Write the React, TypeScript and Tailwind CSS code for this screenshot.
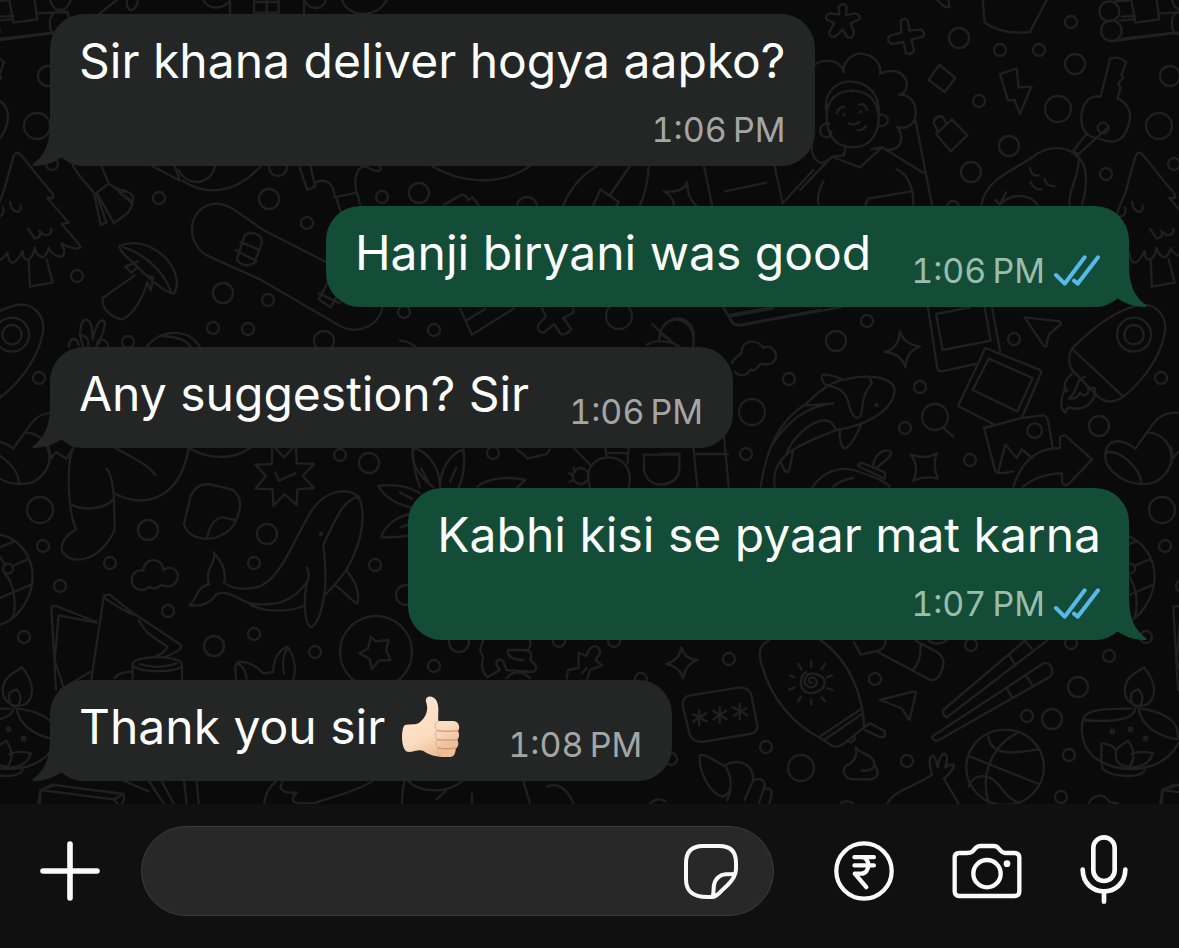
type Message = {
  id: number;
  text: string;
  time: string;
  mine?: boolean;
  thumbsUp?: boolean;
  // long messages push the time onto its own row
  stacked?: boolean;
};

const messages: Message[] = [
  { id: 1, text: "Sir khana deliver hogya aapko?", time: "1:06\u202fPM", stacked: true },
  { id: 2, text: "Hanji biryani was good", time: "1:06\u202fPM", mine: true },
  { id: 3, text: "Any suggestion? Sir", time: "1:06\u202fPM" },
  { id: 4, text: "Kabhi kisi se pyaar mat karna", time: "1:07\u202fPM", mine: true, stacked: true },
  { id: 5, text: "Thank you sir", time: "1:08\u202fPM", thumbsUp: true },
];

// cx, cy, r
const dots = [
  [52, 164, 6], [159, 198, 6], [269, 199, 10], [307, 223, 6], [382, 197, 6], [77, 276, 6],
  [223, 293, 10], [268, 300, 6], [213, 328, 6], [248, 329, 6], [324, 341, 10], [128, 342, 6],
  [37, 126, 13], [48, 76, 10], [278, 167, 9], [959, 38, 10], [1071, 22, 6], [1000, 50, 6],
  [1039, 50, 6], [1075, 64, 10], [979, 101, 6], [1058, 109, 13], [1009, 146, 10], [971, 172, 10],
  [1106, 174, 6], [953, 207, 6], [40, 510, 13], [43, 546, 6], [60, 586, 6], [110, 563, 6],
  [148, 530, 10], [24, 637, 6], [168, 611, 6], [267, 534, 10], [254, 563, 6], [254, 634, 6],
  [214, 646, 10], [315, 652, 6], [375, 565, 6], [340, 455, 6], [369, 463, 10], [406, 595, 10],
  [376, 652, 36], [867, 321, 6], [836, 341, 10], [789, 379, 6], [752, 412, 13], [746, 454, 6],
  [920, 387, 6], [905, 428, 6], [970, 460, 6], [1014, 339, 6], [1099, 426, 10], [39, 378, 6],
  [935, 417, 13], [729, 659, 6], [766, 747, 6], [801, 768, 13], [875, 679, 6], [907, 761, 6],
  [971, 645, 6], [1027, 716, 6], [1052, 719, 10], [1069, 755, 6], [1061, 797, 6], [1078, 687, 10],
  [1109, 656, 6], [1071, 643, 6], [671, 759, 6], [419, 193, 10], [527, 207, 10],
  [404, 312, 6], [434, 330, 6], [619, 316, 13], [434, 666, 6], [459, 642, 10], [493, 453, 6],
  [559, 641, 6], [614, 641, 6], [641, 679, 6],
];

function Wallpaper() {
  return (
    <svg
      className="absolute inset-0 h-full w-full"
      viewBox="0 0 1179 804"
      preserveAspectRatio="xMidYMid slice"
      fill="none"
      stroke="#202020"
      strokeWidth="2.3"
      strokeLinecap="round"
      strokeLinejoin="round"
      aria-hidden="true"
    >
      <defs>
        <g id="doodles">
          {dots.map(([cx, cy, r]) => (
            <circle key={`${cx}-${cy}`} cx={cx} cy={cy} r={r} />
          ))}

          {/* tree, brush, mushroom, skateboard */}
          <g transform="scale(.33333)" strokeWidth="7">
            <path d="M54 458C66 464 78 486 158 582L160 594L142 594L206 668L184 672C208 698 232 724 242 742C228 750 208 744 184 730C196 750 194 766 186 770C160 768 152 756 146 744C140 768 130 774 122 770C112 766 106 754 104 742C102 762 92 780 78 778C68 776 68 762 68 752C58 774 48 788 36 788C26 786 24 770 22 758C8 782-8 786-20 776L-22 752C-44 768-60 770-70 752L-34 700L-10 660C-20 640-8 622-8 622L12 572L40 470Q46 456 54 458ZM30 606C34 640 66 646 62 616M84 686L104 716C124 712 122 700 118 692C134 712 156 708 154 686M-8 650C8 650 14 634 8 622M86 782L90 860L158 848L140 778" />
            <path d="M218 494C234 530 264 552 282 580L302 674L320 668L288 580L326 550L302 494M326 550C340 562 352 570 376 572L360 580L398 604L400 592C396 582 388 574 372 574M338 558L398 612L386 636L342 670L290 578" />
            <path d="M358 738C420 712 490 750 520 806C534 838 534 862 522 880C504 884 446 836 414 802C384 774 356 752 358 738ZM370 742C420 756 486 804 512 872M414 784L376 800L394 818L412 802M404 826L308 894C304 926 332 952 366 958C398 946 426 900 442 846L452 872L460 832L440 826" />
            <path d="M698 626C640 592 590 622 578 668C568 712 592 752 628 770L780 838L1020 978C1080 1008 1140 972 1148 920M698 626L790 690L990 792M734 706C752 692 786 700 786 728L762 790C742 802 720 794 710 778ZM722 726L774 748M706 750L770 784M982 850L956 898L992 922L1010 890M956 880L1020 910" />
            <path d="M0 116L160 98M28 0L40 68L112 58L104 0M0 50L40 48M112 40L204 36M150 60C154 30 200 20 208 54M150 60C148 100 160 110 180 96M150 0C160 40 200 40 212 0M300 40L350 0M380 0C380 50 410 30 414 0M610 0C625 30 670 30 690 0V40M762 0V38H836V0M762 6H836M800 0V38M912 0V40M912 0C930 34 968 30 978 0M1026 0C1040 50 1130 60 1160 0" />
            <path d="M456 498L540 542L524 498M536 510C560 560 630 560 646 498M548 542C620 590 710 580 780 500M898 500L922 570L946 560L932 500M950 546C980 534 1002 552 1004 592L1070 578C1060 540 1068 496 1100 500C1130 520 1150 514 1140 500M1010 596L1022 636M1072 580L1080 612" />
            <path d="M250 1040C232 1000 244 950 262 960C280 966 276 1000 278 1020C286 980 300 950 314 966C318 986 300 1010 298 1030M206 1040C210 1010 230 1010 236 1036M238 1006C256 1004 270 1018 264 1038M290 1038C290 1006 320 1016 326 1040M440 1040C480 990 560 980 600 1040M486 1008C530 1010 560 1020 572 1040" />
          </g>

          {/* girl, key, avocado and small shapes */}
          <g transform="translate(800 0) scale(.33333)" strokeWidth="7">
            <path d="M118 44L116 20Q130 4 140 20L138 46L164 40Q184 44 178 58L152 70L162 96Q160 118 142 112L128 88L106 110Q86 112 88 96L102 70L80 58Q74 42 92 40ZM302 62Q318 50 324 64L328 92L362 88Q376 96 370 110L334 118L342 152Q334 166 318 160L310 126L274 132Q258 122 268 108L304 98ZM418 194L466 234L434 276L386 240ZM600 222L650 206L656 262L694 260L660 342L644 300L624 302ZM408 402L456 358L502 406L452 454ZM414 394L400 368Q408 344 428 350L440 372M548 0L554 68C590 92 640 102 690 96L740 0M412 0Q432 24 448 22L446 0" />
            <path d="M34 206C60 170 120 176 132 216C124 190 160 154 190 162C226 166 246 200 240 222C270 204 310 212 320 246C324 270 308 284 296 284C336 280 352 320 346 350C338 382 310 388 292 380C316 420 300 450 264 450M34 430C34 480 60 500 82 480M80 340C70 290 96 246 150 244C210 246 240 290 236 340C240 400 210 442 160 442C100 440 80 400 80 350C80 300 110 272 158 272C200 274 228 296 234 340M238 344C272 340 272 382 238 378M88 370C56 366 50 410 80 412C92 410 94 400 94 394M110 340Q118 320 132 320M178 314Q194 308 202 330M148 370Q164 378 178 366M172 390Q186 394 198 378M0 570L96 470L132 466L136 444M96 470L180 502L246 442L214 448M246 442L370 518M70 544Q48 590 56 614M290 508C320 520 342 560 340 614M346 360L396 614M196 614L204 596L332 574" />
            <circle cx="132" cy="344" r="2" />
            <circle cx="182" cy="336" r="2" />
            <path d="M902 290L930 176Q956 166 978 186L970 210L964 226L970 234L954 250L962 264L952 296C990 310 1000 350 980 390C968 424 940 430 910 420L868 408C834 384 838 320 868 296Q884 286 902 290ZM856 406L820 452L834 464L918 388M826 466C870 490 860 570 846 614M836 470C840 530 806 560 808 614M830 466C800 440 750 436 710 462C650 510 560 530 544 614M586 600L600 614L618 578M600 614C640 570 700 590 712 614M690 504Q694 530 716 526M692 546Q700 570 724 568M734 538Q740 560 764 558" />
            <circle cx="909" cy="384" r="16" />
            <circle cx="928" cy="34" r="30" />
            <circle cx="934" cy="92" r="31" />
            <path d="M944 4L996 0M958 62L1000 58M934 124L1137 98" />
          </g>

          {/* stocking, whale, cloud, notes */}
          <g transform="translate(0 440) scale(.33333)" strokeWidth="7">
            <path d="M222 20C200 60 200 200 228 268C200 286 176 310 188 336C220 380 300 362 344 270L342 180C340 130 330 100 320 86M216 194C250 212 310 210 340 178M342 160C430 208 540 180 566 24C630 60 700 60 750 24M340 20C390 50 440 70 466 104M572 168Q590 130 626 132L694 148Q724 166 720 200Q712 250 686 272Q650 300 612 296Q560 290 552 250ZM622 290Q634 236 668 232L706 240" />
            <path d="M816 24V72L766 74L798 108L766 146L818 148L820 198L854 162L890 196L892 148L942 144L908 108L942 72L890 70L888 24M826 24L852 52L878 24M826 98L836 122L886 100" />
            <path d="M680 432C700 450 760 450 786 436C850 400 880 300 930 220C970 150 1040 140 1076 170C1100 220 1086 300 1050 370C1030 410 1000 440 974 466M1076 170C1030 180 1010 230 970 314C976 370 980 440 970 480C960 540 940 564 930 560C910 540 910 460 926 410Q926 390 920 382M924 420C880 490 820 500 750 490C700 470 680 450 650 462C630 490 610 500 568 496C590 480 588 440 628 432C610 390 650 370 642 338C670 370 680 400 672 430M750 494C800 520 870 514 910 498M1042 394C1070 430 1080 460 1072 490C1050 480 1030 450 1004 436" />
            <circle cx="963" cy="282" r="3" />
            <path d="M430 392C430 350 490 350 490 390C520 370 546 400 528 426C516 444 490 440 484 434C470 450 454 446 448 440C430 458 400 450 396 426C392 400 410 388 430 392ZM168 750L154 500L168 498L290 546M190 740L164 660L176 526L290 548M274 718L312 466L328 464L400 520L544 616Q548 630 500 648M314 474Q380 520 410 526M416 540C440 590 480 600 502 620Q496 640 460 652M398 672C400 644 546 644 546 674C546 700 398 700 398 672V716M546 676V716M420 672Q470 690 530 670M344 714Q360 694 396 696M180 750L270 696" />
            <path d="M708 716C704 690 706 668 716 666C750 664 770 680 790 700L820 696C820 650 840 630 862 620C884 650 890 690 880 716M740 716C736 690 730 680 716 672M852 700C846 670 850 640 864 624M1112 590L1128 604L1166 600L1158 630L1172 660L1136 662L1116 688L1108 656L1078 640L1104 626Z" />
            <path d="M0 284C60 296 98 350 98 412C96 480 50 540 0 554M0 322L42 304M36 378L84 358M0 474L94 434M14 400C50 440 48 510 36 536M0 350L16 376" />
            <circle cx="24" cy="386" r="15" />
            <path d="M1240 24C1236 60 1250 120 1260 140M1136 138C1180 130 1230 140 1260 160M1136 140C1160 180 1200 196 1240 204M1144 292C1150 260 1190 230 1230 222M1144 292Q1190 294 1230 286M1200 158L1236 176M1202 262L1228 252" />
            <path d="M146 20L154 54L168 36L200 56L222 20" />
          </g>

          {/* orca, photos, rocket, arrows */}
          <g transform="translate(660 300) scale(.33333)" strokeWidth="7">
            <path d="M190 22L218 70Q226 78 240 76L540 22M210 44L340 22M0 100C20 40 90 40 102 100L100 136M0 100L50 136M216 190C220 170 240 166 244 160C246 112 300 120 310 144C340 130 360 170 340 186C326 200 306 190 300 192C290 210 280 214 272 208C260 230 236 230 224 214M720 94Q732 132 780 140Q740 152 736 202Q724 160 674 156Q716 146 720 94ZM752 464Q800 480 830 460Q816 500 834 536Q796 526 760 542Q780 500 752 464Z" />
            <path d="M490 224C520 224 540 236 550 240C620 220 700 230 704 270C700 340 600 380 530 390C430 430 330 460 344 560M302 560C320 440 360 360 440 310C470 280 510 250 540 242M498 256C480 240 484 224 490 224M500 256C590 270 550 330 590 354C620 350 590 300 636 250L630 236M440 316L520 310C430 320 380 370 340 430M380 460C400 400 500 320 526 386M540 388C536 420 546 450 558 444C580 430 590 400 606 368M362 486C370 500 372 520 384 516C394 500 394 470 400 450" />
            <circle cx="650" cy="315" r="3" />
            <path d="M458 560C500 500 560 500 600 516C640 530 670 540 690 560M520 560Q540 540 580 534M594 498L674 536Q680 520 668 514L610 490Q596 488 594 498ZM640 498C640 470 670 440 694 456C690 480 660 490 650 504M850 384L880 410" />
            <path d="M804 22L832 206Q836 216 846 214L946 192M996 22L1020 154M828 42L848 150L992 122L974 22M828 42L930 22M976 144L1136 208Q1146 214 1142 222L1086 352M976 144L894 318L1000 372M986 176L1118 234L1072 334L938 270ZM1086 354L972 384L1006 514Q1010 524 1060 514M1086 354L1148 346Q1160 346 1164 362L1178 440M1014 518L1036 434L1070 474L1086 448L1116 474M1060 560C1090 470 1140 444 1200 444V412Q1212 400 1222 412L1296 478L1226 552Q1214 560 1206 548V520Q1140 520 1088 560" />
            <circle cx="1124" cy="392" r="22" />
            <path d="M1094 52L1200 64Q1206 72 1196 78L1166 104L1158 140L1150 136ZM1236 146C1300 80 1370 30 1440 14C1500 10 1522 60 1514 100C1500 180 1440 250 1388 292C1356 312 1330 306 1310 286L1240 214C1220 190 1228 160 1236 146ZM1240 150L1390 290M1236 222C1210 240 1210 270 1222 274L1216 262C1200 300 1200 330 1216 338C1220 320 1230 320 1240 326C1290 330 1310 290 1304 264L1284 262C1290 290 1270 290 1260 278C1250 300 1236 294 1226 296C1260 270 1240 240 1276 230" />
            <circle cx="1422" cy="104" r="51" />
            <circle cx="1422" cy="104" r="29" />
            <path d="M1336 460C1340 420 1380 410 1426 446L1480 370Q1510 330 1570 340M1466 398C1510 400 1540 440 1534 490M1336 460C1370 440 1440 500 1444 550C1490 560 1530 520 1536 474M1336 460C1330 500 1380 550 1444 552" />
            <path d="M0 462H58V510Q50 550 0 554M100 444L112 560M104 462H204M192 410L206 560" />
          </g>

          {/* sunscreen, ball, chopsticks, diya */}
          <g transform="translate(640 630) scale(.34375 .33333)" strokeWidth="7">
            <path d="M120 52Q130 88 168 90Q132 102 126 144Q112 108 76 102Q116 90 120 52ZM146 196L290 172Q318 174 324 196L342 290Q340 310 318 312L180 336Q150 334 144 312L124 226Q124 200 146 196ZM172 240V286M154 252L194 274M156 274L192 250M232 232V278M212 242L252 268M214 268L250 242M290 222V268M270 232L312 256M272 258L310 234" />
            <path d="M374 32C340 50 346 80 356 110C380 200 440 280 524 324L560 348Q580 356 604 332L652 292C650 200 610 90 524 30M526 318L642 238M536 330L648 250M606 334Q620 342 626 322M654 290L670 280L712 304V320L700 322L654 300M498 94V110M498 210V224M460 102L470 118M538 102L528 118M436 136L450 142M434 178L450 172M558 136L544 142M560 180L544 174M468 200L460 214M528 202L538 214M500 158C488 158 488 142 502 142C520 146 518 172 496 172C470 168 474 130 504 130C530 136 548 150 530 176C500 200 470 190 468 160C468 140 474 130 484 126" />
            <path d="M628 352C632 370 680 370 682 404C700 430 690 448 664 448H620C594 446 586 420 600 406C620 400 634 380 628 352ZM682 404Q680 424 644 422M698 210L796 184Q804 184 802 192L784 270L760 234ZM622 36L642 74L700 60Q716 48 714 32M692 66L840 148Q860 154 870 138C890 100 886 80 860 64L802 32M794 120Q820 90 816 40M840 32Q860 50 892 32M882 240L1122 30M892 262L1184 32M882 240Q880 262 896 262M1074 74L1090 102M1122 36L1140 56M852 318L1174 100Q1198 96 1200 126Q1196 140 1186 144L866 332Q846 332 852 318ZM1068 176L1082 202M1124 138L1140 164" />
            <circle cx="1062" cy="412" r="113" />
            <path d="M960 380L1160 462M1096 310C1020 350 990 440 1014 518M1014 320C1020 380 1090 370 1160 358M956 470C970 430 1010 430 1040 460C1060 490 1080 512 1106 520M720 520C740 480 800 470 850 434C840 400 840 380 852 378C862 380 862 400 866 412C870 380 884 360 892 378C896 396 886 412 888 412C904 400 918 400 912 412C900 436 890 440 884 446L926 520" />
            <path d="M174 376C190 370 210 390 250 410C270 450 270 490 240 500C200 490 170 420 174 376ZM246 406C300 380 330 410 330 450L304 510M254 510L264 480M332 450C360 440 366 460 360 476L346 520M366 476C386 472 386 490 376 520M30 520Q50 500 74 514M584 520Q600 508 620 520M1306 520C1320 490 1350 490 1366 516L1390 520M1518 520L1520 480L1568 464" />
            <path d="M1466 112C1496 150 1506 190 1480 220C1450 240 1410 220 1410 180C1412 140 1440 130 1466 112ZM1450 178C1470 200 1460 226 1446 230C1430 228 1424 200 1432 186ZM1440 236C1440 260 1400 280 1290 270C1290 240 1350 234 1430 236M1450 236C1460 290 1510 320 1564 328C1570 280 1540 250 1458 236M1288 270C1276 340 1310 380 1344 396C1400 430 1520 430 1566 340M1342 400V340Q1370 340 1386 360C1390 350 1410 340 1420 332C1440 360 1440 390 1424 410C1390 410 1380 390 1386 360M1430 372Q1460 360 1492 370Q1480 410 1430 412M1344 406C1340 440 1460 450 1468 420" />
            <circle cx="1374" cy="304" r="5" />
            <circle cx="1427" cy="298" r="5" />
            <circle cx="1471" cy="326" r="5" />
          </g>

          {/* bottom edge */}
          <g transform="translate(0 660) scale(.33333)" strokeWidth="7">
            <path d="M114 432L122 390L156 374L370 402Q376 420 366 430M122 390L340 418L352 430M340 418L362 408M370 362L446 394M446 362L492 432M484 362L522 432M552 362L560 432M590 362L596 432M792 432Q796 390 830 362M850 362C830 390 850 400 890 398C860 430 890 432 940 430C1000 410 1080 390 1116 364M1206 432Q1206 390 1214 364M1226 364C1260 400 1340 400 1386 364M1310 418L1340 390M1416 400V430M1570 364L1590 430M1640 380Q1690 360 1720 430" />
          </g>

          {/* strips between the middle bubbles */}
          <g transform="translate(400 150) scale(.33333)" strokeWidth="7">
            <path d="M96 48C180 100 300 110 390 48M130 166L184 134Q200 134 204 150L218 142L236 166M490 166Q520 90 592 48M690 48L632 132M580 166L602 118L656 156L650 166M746 48Q744 110 720 166M792 124Q850 130 862 96Q860 140 888 166M792 124Q820 140 822 166M912 48L936 166M976 124L1098 98M1124 48L1148 160L1240 60M180 476L216 554L340 476M198 512L256 476M426 476L438 498L414 526Q410 546 432 548L462 522L482 552Q500 556 514 538L490 504L520 488V476M756 522L820 580M778 568C780 490 870 490 880 560V588M740 584C770 564 820 576 836 588M972 476L1000 520Q1010 526 1024 524L1260 480M988 500L1120 476M0 572Q24 574 44 588" />
          </g>
          <g transform="translate(400 440) scale(.33333)" strokeWidth="7">
            <path d="M38 24C30 70 60 110 100 142M38 24C80 30 120 80 120 142C120 90 150 40 190 28C196 70 190 110 176 142M64 86L84 124M168 84L150 126M232 140C270 110 330 110 376 120L352 142M350 28C366 40 370 40 382 56L440 42L450 28M522 24L572 76M616 24L620 50M686 24L682 72M620 38L684 40M570 142C550 80 590 50 630 52C670 54 700 90 686 142M508 100L520 108M520 82L526 96M508 126L520 120M730 44H838M732 44V90Q740 130 780 134Q826 132 836 100" />
            <circle cx="542" cy="108" r="24" />
            <path d="M250 602C236 630 240 640 250 650C240 680 250 700 262 712L300 690C280 670 290 650 310 664L320 690L400 696C420 680 400 670 390 660C400 640 390 630 370 630H324C320 650 340 660 370 660M390 602Q396 620 380 632M320 714Q350 680 390 714M500 716L504 690L536 684V638L560 648C570 610 600 610 600 640L586 660L606 676L570 690L562 716M546 700L560 684" />
          </g>
        </g>
      </defs>
      {/* the tile repeats every 1122 units */}
      <use href="#doodles" />
      <use href="#doodles" x="-1122" />
      <use href="#doodles" x="1122" />
    </svg>
  );
}

function Ticks() {
  return (
    <svg
      width="48"
      height="32"
      viewBox="517 74 144 96"
      fill="none"
      stroke="#57b9e8"
      strokeWidth="12"
      strokeLinecap="round"
      strokeLinejoin="round"
      role="img"
      aria-label="Read"
    >
      <path d="M526 134L552 160L612 81M580 151L591 160L652 81" />
    </svg>
  );
}

function ThumbsUp() {
  return (
    <svg className="-my-2 mr-2" width="59" height="62" viewBox="64 46 178 188" role="img" aria-label="Thumbs up">
      <defs>
        <linearGradient id="skin" x1="0" y1="0" x2="0.5" y2="1">
          <stop offset="0" stopColor="#ffe6cf" />
          <stop offset="0.7" stopColor="#fbdcc0" />
          <stop offset="1" stopColor="#eebd98" />
        </linearGradient>
      </defs>
      <path
        d="M139 62C136 44 160 42 170 58C182 78 174 104 177 122L222 122C244 124 242 148 236 152C242 160 240 174 234 178C240 188 238 200 230 205C228 220 226 231 208 231C180 232 150 228 132 213C118 205 100 218 82 215C66 210 62 160 72 138C78 128 104 136 118 128C136 114 150 92 139 62Z"
        fill="url(#skin)"
      />
      <path
        d="M177 122C166 126 164 142 174 150C166 158 166 172 174 178C168 186 168 198 176 204C172 212 174 222 182 228"
        fill="none"
        stroke="#e3ad88"
        strokeWidth="3"
      />
      <path
        d="M174 151Q206 155 236 151M174 178Q206 182 234 178M176 204Q204 208 230 204"
        fill="none"
        stroke="#cf9875"
        strokeWidth="4"
        strokeLinecap="round"
      />
    </svg>
  );
}

function Tail({ mine }: { mine?: boolean }) {
  return (
    <svg
      className={
        mine
          ? "absolute bottom-0 -right-[18px] -scale-x-100 fill-[#144d37]"
          : "absolute bottom-0 -left-[18px] fill-[#242626]"
      }
      width="48"
      height="46"
      viewBox="0 0 48 46"
      aria-hidden="true"
    >
      <path d="M18 2C18 24 13 35 0.500 44.500Q0 46 2 46C13 46 23 42 30 37L48 20V0Z" />
    </svg>
  );
}

function Bubble({ message }: { message: Message }) {
  const { text, time, mine, thumbsUp, stacked } = message;
  return (
    <li
      className={`relative flex rounded-[34px] pt-[17px] pb-4 pl-[29px] ${
        mine ? "self-end bg-[#144d37] pr-7" : "self-start bg-[#242626] pr-[30px]"
      } ${stacked ? "flex-col gap-[19px]" : "items-end gap-10"}`}
    >
      <Tail mine={mine} />
      <p
        className={`relative flex items-center gap-4 text-[48px] leading-[60px] text-[#fcfefd] ${
          stacked ? "" : "mb-2"
        }`}
      >
        {text}
        {thumbsUp && <ThumbsUp />}
      </p>
      <div
        className={`relative flex items-center gap-2 self-end text-[34px] leading-[40px] tabular-nums ${
          mine ? "text-[#9abdac]" : "text-[#a4a6a6]"
        }`}
      >
        <time>{time}</time>
        {mine && <Ticks />}
      </div>
    </li>
  );
}

export default function App() {
  return (
    <div className="flex min-h-screen flex-col bg-[#101010] font-['Inter',sans-serif]">
      <main className="relative flex-1 overflow-hidden bg-[#0a0a0a]">
        <Wallpaper />
        <ul className="relative flex flex-col gap-10 px-[50px] pt-[14px] pb-[23px]">
          {messages.map((message) => (
            <Bubble key={message.id} message={message} />
          ))}
        </ul>
      </main>

      <footer className="flex items-center pt-[22px] pr-[51px] pb-8 pl-10 text-[#fafafa]">
        <button type="button" aria-label="Attach">
          <svg width="60" height="60" viewBox="0 0 60 60" fill="none" stroke="currentColor" strokeWidth="5.6" strokeLinecap="round">
            <path d="M30 3V57M3 30H57" />
          </svg>
        </button>

        <div className="mr-[60px] ml-[41px] flex h-[90px] min-w-0 flex-1 items-center rounded-full border border-[#3a3a3a] bg-[#282828] pr-[34px] pl-10">
          <input
            type="text"
            aria-label="Message"
            className="min-w-0 flex-1 bg-transparent text-[48px] text-white outline-none"
          />
          <button type="button" aria-label="Stickers">
            <svg width="56" height="57" viewBox="-84 114 168 171" fill="none" stroke="currentColor" strokeWidth="12" strokeLinecap="round" strokeLinejoin="round">
              <path d="M5 276H-11C-58 276-75 256-75 222V175C-75 140-59 123-24 123H25C60 123 75 142 75 173V192C75 212 64 226 50 240L32 257C23 267 15 275 5 276C9 262 7 250 9 240C13 220 28 209 43 208C56 208 66 208 73 206" />
            </svg>
          </button>
        </div>

        <div className="flex items-center gap-[58px]">
          <button type="button" aria-label="Pay">
            <svg width="60" height="60" viewBox="-91 107 182 182" fill="none" stroke="currentColor" strokeWidth="13" strokeLinecap="round" strokeLinejoin="round">
              <circle cx="0" cy="198" r="84" />
              <path d="M-29 156H30M-29 181H30M-7 156C20 156 20 206-9 206H-28L7 247" />
            </svg>
          </button>
          <button type="button" aria-label="Camera">
            <svg width="70" height="60" viewBox="-105 108 210 180" fill="none" stroke="currentColor" strokeWidth="13" strokeLinejoin="round">
              <path d="M-97 158Q-97 144-83 144H-61Q-49 144-43 139L-32 127Q-27 123-20 123H20Q28 123 32 127L41 137Q47 144 57 144H83Q97 144 97 158V259Q97 273 83 273H-83Q-97 273-97 259Z" />
              <circle cx="0" cy="206" r="41" />
              <circle cx="60" cy="176" r="10" fill="currentColor" stroke="none" />
            </svg>
          </button>
          <button type="button" aria-label="Record voice message">
            <svg width="48" height="72" viewBox="-72 90 144 216" fill="none" stroke="currentColor" strokeWidth="14" strokeLinecap="round">
              <rect x="-32" y="97" width="64" height="131" rx="32" />
              <path d="M-64 194C-63 236-33 259 0 259C33 259 63 236 64 194M0 259V290" />
            </svg>
          </button>
        </div>
      </footer>
    </div>
  );
}
